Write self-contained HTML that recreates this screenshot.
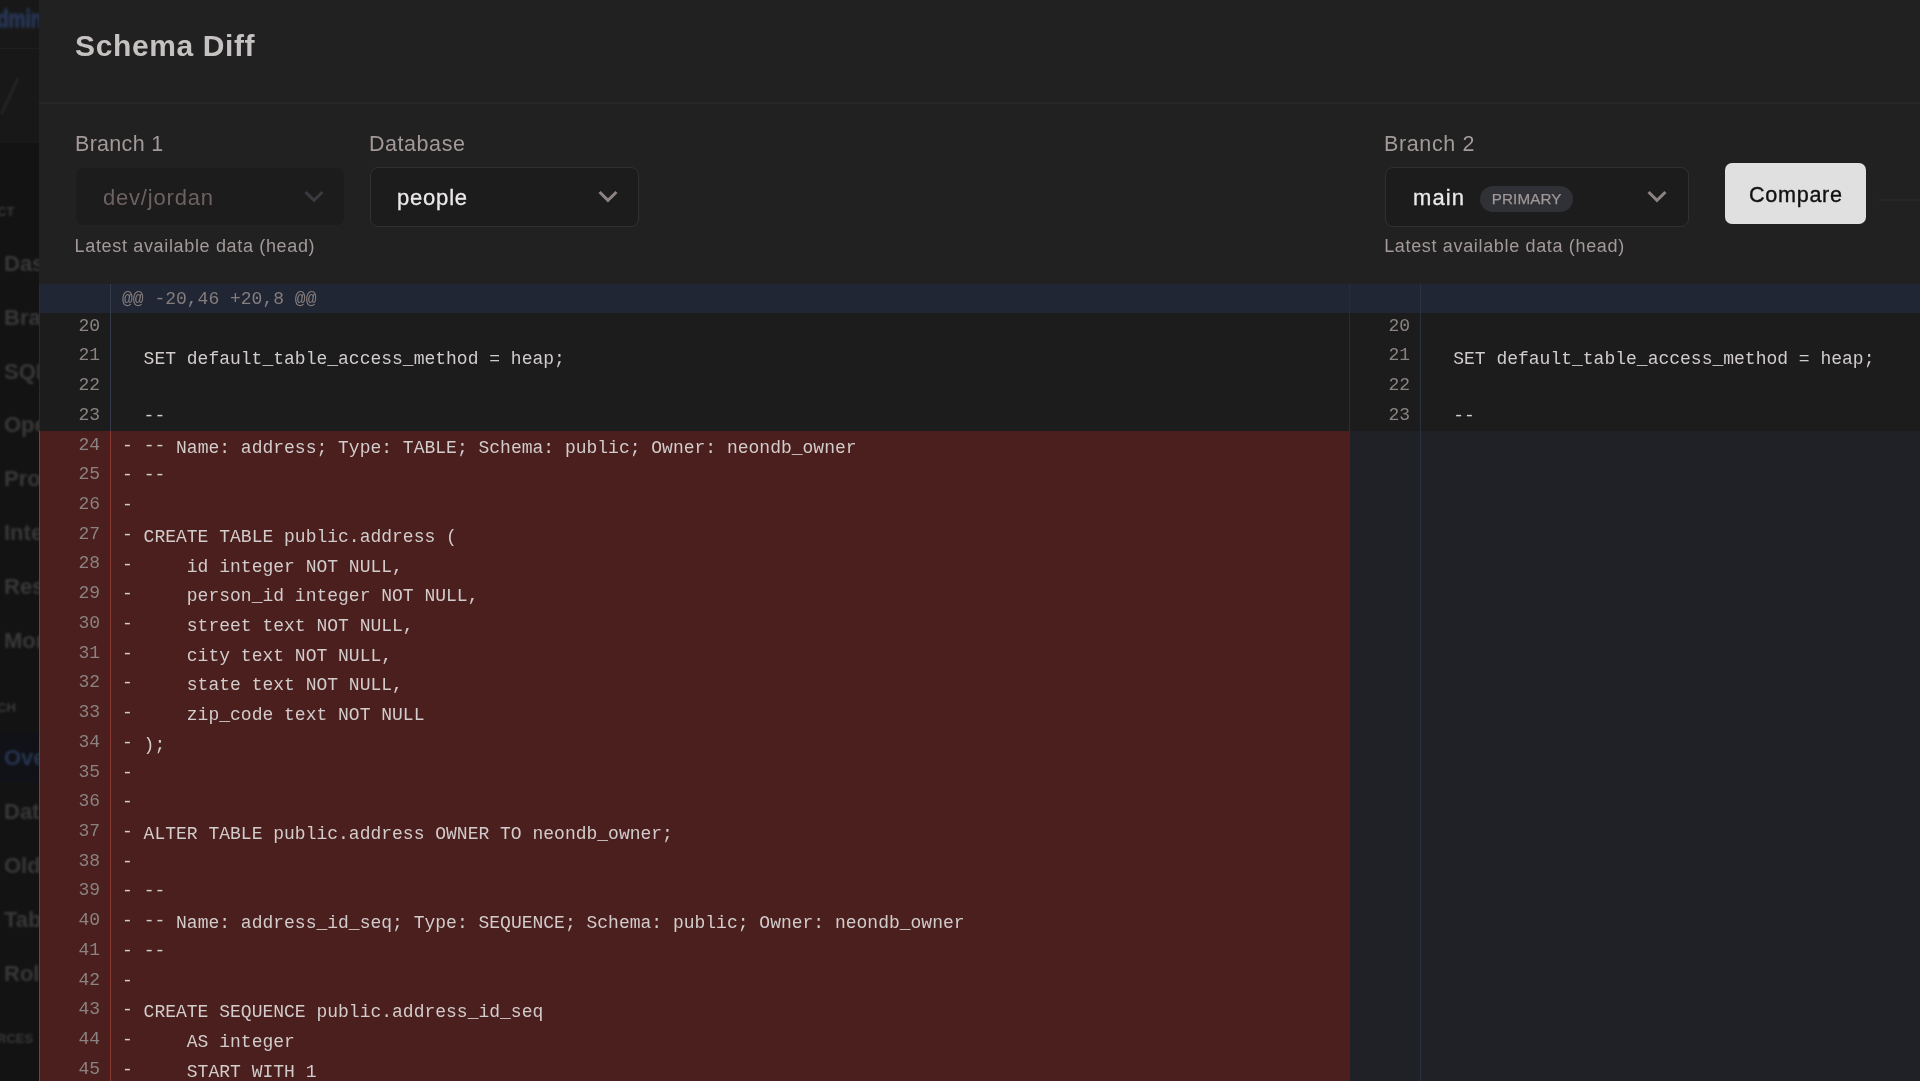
<!DOCTYPE html><html><head><meta charset="utf-8"><title>Schema Diff</title><style>
*{margin:0;padding:0;box-sizing:border-box}
html,body{width:1920px;height:1081px;overflow:hidden;background:#212121}
body{position:relative;font-family:"Liberation Sans",sans-serif}
.abs{position:absolute}
.sb{left:0;top:0;width:39px;height:1081px;background:#131313;overflow:hidden}
.sbtop{left:0;top:0;width:39px;height:143px;background:#181818}
.sbt{white-space:pre;filter:blur(1px);line-height:1}
.ovr{left:0;top:733px;width:39px;height:49px;background:#101217}
.panel{left:39px;top:0;width:1881px;height:284px;background:#212121}
.hr{left:39px;top:102px;width:1881px;height:2px;background:#272728}
.title{left:75px;top:29px;font-size:30px;font-weight:bold;color:#c6c2c2;letter-spacing:.62px;line-height:34px;white-space:pre}
.lbl{font-size:21.5px;color:#a39999;letter-spacing:.3px;line-height:24px;white-space:pre}
.help{font-size:18px;color:#a39999;letter-spacing:.66px;line-height:21px;white-space:pre}
.sel{background:#1c1c1c;border-radius:8px}
.selb{border:1px solid #313134}
.selt{font-size:22px;letter-spacing:.8px;line-height:26px;white-space:pre}
.pill{left:1479.7px;top:185.7px;width:93.4px;height:26.5px;border-radius:13.25px;background:#303136}
.pillt{left:1491.8px;top:189.6px;font-size:15.2px;letter-spacing:.1px;color:#a09797;-webkit-text-stroke:.25px #a09797;line-height:17px;white-space:pre}
.btn{left:1725px;top:163.3px;width:141px;height:60.7px;border-radius:7px;background:#e0e0e0}
.btnt{left:1749px;top:181.6px;font-size:21.6px;letter-spacing:.7px;color:#111;-webkit-text-stroke:.35px #111;line-height:25px;white-space:pre}
.dl{left:1879px;top:198.5px;width:41px;height:2px;background:#272728}
.mono{font-family:"Liberation Mono",monospace;font-size:18px;white-space:pre;line-height:20px;transform:scaleY(1.05);transform-origin:0 50%}
.ln{color:#8b8282;font-size:18px;text-align:right;width:60px;transform:scaleY(1.03)}
.code{color:#d2cccc}
.hunk{color:#857d7d}
.hy{position:relative;top:-1.8px}
</style></head><body><div class="abs" style="left:0;top:0;width:1920px;height:1081px;will-change:transform">
<div class="abs sb"><div class="abs sbtop"></div><div class="abs ovr"></div>
<div class="abs sbt" style="top:9px;left:-3px;font-size:19px;color:#273554;font-weight:bold;filter:blur(1.3px);transform:scaleY(1.25);-webkit-text-stroke:1px #273554;">dmin</div>
<div class="abs sbt" style="top:205px;left:-3px;font-size:13px;color:#3a3a3a;font-weight:bold;">CT</div>
<div class="abs sbt" style="top:253px;left:4px;font-size:22px;color:#393939;font-weight:bold;">Das</div>
<div class="abs sbt" style="top:307px;left:4px;font-size:22px;color:#393939;font-weight:bold;">Bra</div>
<div class="abs sbt" style="top:361px;left:4px;font-size:22px;color:#393939;font-weight:bold;">SQL</div>
<div class="abs sbt" style="top:414px;left:4px;font-size:22px;color:#393939;font-weight:bold;">Ope</div>
<div class="abs sbt" style="top:468px;left:4px;font-size:22px;color:#393939;font-weight:bold;">Proj</div>
<div class="abs sbt" style="top:522px;left:4px;font-size:22px;color:#393939;font-weight:bold;">Inte</div>
<div class="abs sbt" style="top:576px;left:4px;font-size:22px;color:#393939;font-weight:bold;">Res</div>
<div class="abs sbt" style="top:630px;left:4px;font-size:22px;color:#393939;font-weight:bold;">Mon</div>
<div class="abs sbt" style="top:701px;left:-3px;font-size:13px;color:#3a3a3a;font-weight:bold;">CH</div>
<div class="abs sbt" style="top:747px;left:4px;font-size:22px;color:#27344f;font-weight:bold;">Ove</div>
<div class="abs sbt" style="top:801px;left:4px;font-size:22px;color:#393939;font-weight:bold;">Dat</div>
<div class="abs sbt" style="top:855px;left:4px;font-size:22px;color:#393939;font-weight:bold;">Old</div>
<div class="abs sbt" style="top:909px;left:4px;font-size:22px;color:#393939;font-weight:bold;">Tab</div>
<div class="abs sbt" style="top:963px;left:4px;font-size:22px;color:#393939;font-weight:bold;">Role</div>
<div class="abs sbt" style="top:1032px;left:-3px;font-size:13px;color:#3a3a3a;font-weight:bold;">RCES</div>
<svg class="abs" style="left:0;top:70px;filter:blur(1px)" width="39" height="50"><path d="M1.5 44 L18 8" stroke="#252525" stroke-width="3" fill="none"/></svg><div class="abs" style="left:0;top:48px;width:39px;height:1px;background:#1f1f1f"></div>
</div>
<div class="abs panel"></div><div class="abs hr"></div>
<div class="abs title">Schema Diff</div>
<div class="abs lbl" style="left:75px;top:132px">Branch 1</div>
<div class="abs lbl" style="left:369px;top:132px;letter-spacing:.55px">Database</div>
<div class="abs lbl" style="left:1384px;top:132px;letter-spacing:.62px">Branch 2</div>
<div class="abs sel" style="left:76px;top:168px;width:268px;height:57px"></div>
<div class="abs selt" style="left:103px;top:185px;color:#6e6161">dev/jordan</div>
<svg class="abs" style="left:303px;top:189px" width="22" height="16" viewBox="0 0 22 16"><path d="M3.6 4 L11 11.4 L18.4 4" fill="none" stroke="#3a3b41" stroke-width="3" stroke-linecap="square" stroke-linejoin="miter"/></svg>
<div class="abs sel selb" style="left:370px;top:167px;width:269px;height:59.5px"></div>
<div class="abs selt" style="left:397px;top:185px;color:#ebe8e8;-webkit-text-stroke:.3px #ebe8e8">people</div>
<svg class="abs" style="left:597px;top:189px" width="22" height="16" viewBox="0 0 22 16"><path d="M3.6 4 L11 11.4 L18.4 4" fill="none" stroke="#8c8383" stroke-width="3" stroke-linecap="square" stroke-linejoin="miter"/></svg>
<div class="abs sel selb" style="left:1385px;top:167px;width:304px;height:59.5px"></div>
<div class="abs selt" style="left:1413px;top:185px;color:#ebe8e8;-webkit-text-stroke:.3px #ebe8e8;letter-spacing:1.1px">main</div>
<div class="abs pill"></div><div class="abs pillt">PRIMARY</div>
<svg class="abs" style="left:1646px;top:189px" width="22" height="16" viewBox="0 0 22 16"><path d="M3.6 4 L11 11.4 L18.4 4" fill="none" stroke="#8c8383" stroke-width="3" stroke-linecap="square" stroke-linejoin="miter"/></svg>
<div class="abs btn"></div><div class="abs btnt">Compare</div><div class="abs dl"></div>
<div class="abs help" style="left:74.6px;top:236px">Latest available data (head)</div>
<div class="abs help" style="left:1384.2px;top:236px">Latest available data (head)</div>
<div class="abs" style="left:39px;top:284px;width:1881px;height:797px;background:#1c1c1c"></div>
<div class="abs" style="left:1350px;top:431.38px;width:570px;height:649.62px;background:#202127"></div>
<div class="abs" style="left:39px;top:284px;width:1881px;height:28.5px;background:#202633"></div>
<div class="abs" style="left:39px;top:431.38px;width:1311px;height:649.62px;background:#4a1f1d"></div>
<div class="abs" style="left:39px;top:284px;width:1px;height:147.38px;background:#242b3a"></div>
<div class="abs" style="left:39px;top:431.38px;width:1.4px;height:649.62px;background:#8a3a32"></div>
<div class="abs" style="left:110px;top:284px;width:1px;height:147.38px;background:#333a49"></div>
<div class="abs" style="left:110px;top:431.38px;width:1px;height:649.62px;background:#8a3a32"></div>
<div class="abs" style="left:1349px;top:284px;width:1px;height:797px;background:#2d2d31"></div>
<div class="abs" style="left:1420px;top:284px;width:1px;height:797px;background:#2c3140"></div>
<div class="abs mono hunk" style="left:122px;top:289.3px">@@ -20,46 +20,8 @@</div>
<div class="abs mono ln" style="left:40px;top:315.70px">20</div>
<div class="abs mono ln" style="left:40px;top:345.42px">21</div>
<div class="abs mono code" style="left:122px;top:348.52px">  SET default_table_access_method = heap;</div>
<div class="abs mono ln" style="left:40px;top:375.14px">22</div>
<div class="abs mono ln" style="left:40px;top:404.86px">23</div>
<div class="abs mono code" style="left:122px;top:407.96px">  <span class="hy">--</span></div>
<div class="abs mono ln" style="left:40px;top:434.58px">24</div>
<div class="abs mono code" style="left:122px;top:437.68px"><span class="hy">-</span> <span class="hy">--</span> Name: address; Type: TABLE; Schema: public; Owner: neondb_owner</div>
<div class="abs mono ln" style="left:40px;top:464.30px">25</div>
<div class="abs mono code" style="left:122px;top:467.40px"><span class="hy">-</span> <span class="hy">--</span></div>
<div class="abs mono ln" style="left:40px;top:494.02px">26</div>
<div class="abs mono code" style="left:122px;top:497.12px"><span class="hy">-</span></div>
<div class="abs mono ln" style="left:40px;top:523.74px">27</div>
<div class="abs mono code" style="left:122px;top:526.84px"><span class="hy">-</span> CREATE TABLE public.address (</div>
<div class="abs mono ln" style="left:40px;top:553.46px">28</div>
<div class="abs mono code" style="left:122px;top:556.56px"><span class="hy">-</span>     id integer NOT NULL,</div>
<div class="abs mono ln" style="left:40px;top:583.18px">29</div>
<div class="abs mono code" style="left:122px;top:586.28px"><span class="hy">-</span>     person_id integer NOT NULL,</div>
<div class="abs mono ln" style="left:40px;top:612.90px">30</div>
<div class="abs mono code" style="left:122px;top:616.00px"><span class="hy">-</span>     street text NOT NULL,</div>
<div class="abs mono ln" style="left:40px;top:642.62px">31</div>
<div class="abs mono code" style="left:122px;top:645.72px"><span class="hy">-</span>     city text NOT NULL,</div>
<div class="abs mono ln" style="left:40px;top:672.34px">32</div>
<div class="abs mono code" style="left:122px;top:675.44px"><span class="hy">-</span>     state text NOT NULL,</div>
<div class="abs mono ln" style="left:40px;top:702.06px">33</div>
<div class="abs mono code" style="left:122px;top:705.16px"><span class="hy">-</span>     zip_code text NOT NULL</div>
<div class="abs mono ln" style="left:40px;top:731.78px">34</div>
<div class="abs mono code" style="left:122px;top:734.88px"><span class="hy">-</span> );</div>
<div class="abs mono ln" style="left:40px;top:761.50px">35</div>
<div class="abs mono code" style="left:122px;top:764.60px"><span class="hy">-</span></div>
<div class="abs mono ln" style="left:40px;top:791.22px">36</div>
<div class="abs mono code" style="left:122px;top:794.32px"><span class="hy">-</span></div>
<div class="abs mono ln" style="left:40px;top:820.94px">37</div>
<div class="abs mono code" style="left:122px;top:824.04px"><span class="hy">-</span> ALTER TABLE public.address OWNER TO neondb_owner;</div>
<div class="abs mono ln" style="left:40px;top:850.66px">38</div>
<div class="abs mono code" style="left:122px;top:853.76px"><span class="hy">-</span></div>
<div class="abs mono ln" style="left:40px;top:880.38px">39</div>
<div class="abs mono code" style="left:122px;top:883.48px"><span class="hy">-</span> <span class="hy">--</span></div>
<div class="abs mono ln" style="left:40px;top:910.10px">40</div>
<div class="abs mono code" style="left:122px;top:913.20px"><span class="hy">-</span> <span class="hy">--</span> Name: address_id_seq; Type: SEQUENCE; Schema: public; Owner: neondb_owner</div>
<div class="abs mono ln" style="left:40px;top:939.82px">41</div>
<div class="abs mono code" style="left:122px;top:942.92px"><span class="hy">-</span> <span class="hy">--</span></div>
<div class="abs mono ln" style="left:40px;top:969.54px">42</div>
<div class="abs mono code" style="left:122px;top:972.64px"><span class="hy">-</span></div>
<div class="abs mono ln" style="left:40px;top:999.26px">43</div>
<div class="abs mono code" style="left:122px;top:1002.36px"><span class="hy">-</span> CREATE SEQUENCE public.address_id_seq</div>
<div class="abs mono ln" style="left:40px;top:1028.98px">44</div>
<div class="abs mono code" style="left:122px;top:1032.08px"><span class="hy">-</span>     AS integer</div>
<div class="abs mono ln" style="left:40px;top:1058.70px">45</div>
<div class="abs mono code" style="left:122px;top:1061.80px"><span class="hy">-</span>     START WITH 1</div>
<div class="abs mono ln" style="left:1350px;top:315.70px">20</div>
<div class="abs mono ln" style="left:1350px;top:345.42px">21</div>
<div class="abs mono code" style="left:1431.6px;top:348.52px">  SET default_table_access_method = heap;</div>
<div class="abs mono ln" style="left:1350px;top:375.14px">22</div>
<div class="abs mono ln" style="left:1350px;top:404.86px">23</div>
<div class="abs mono code" style="left:1431.6px;top:407.96px">  <span class="hy">--</span></div>
</div></body></html>
